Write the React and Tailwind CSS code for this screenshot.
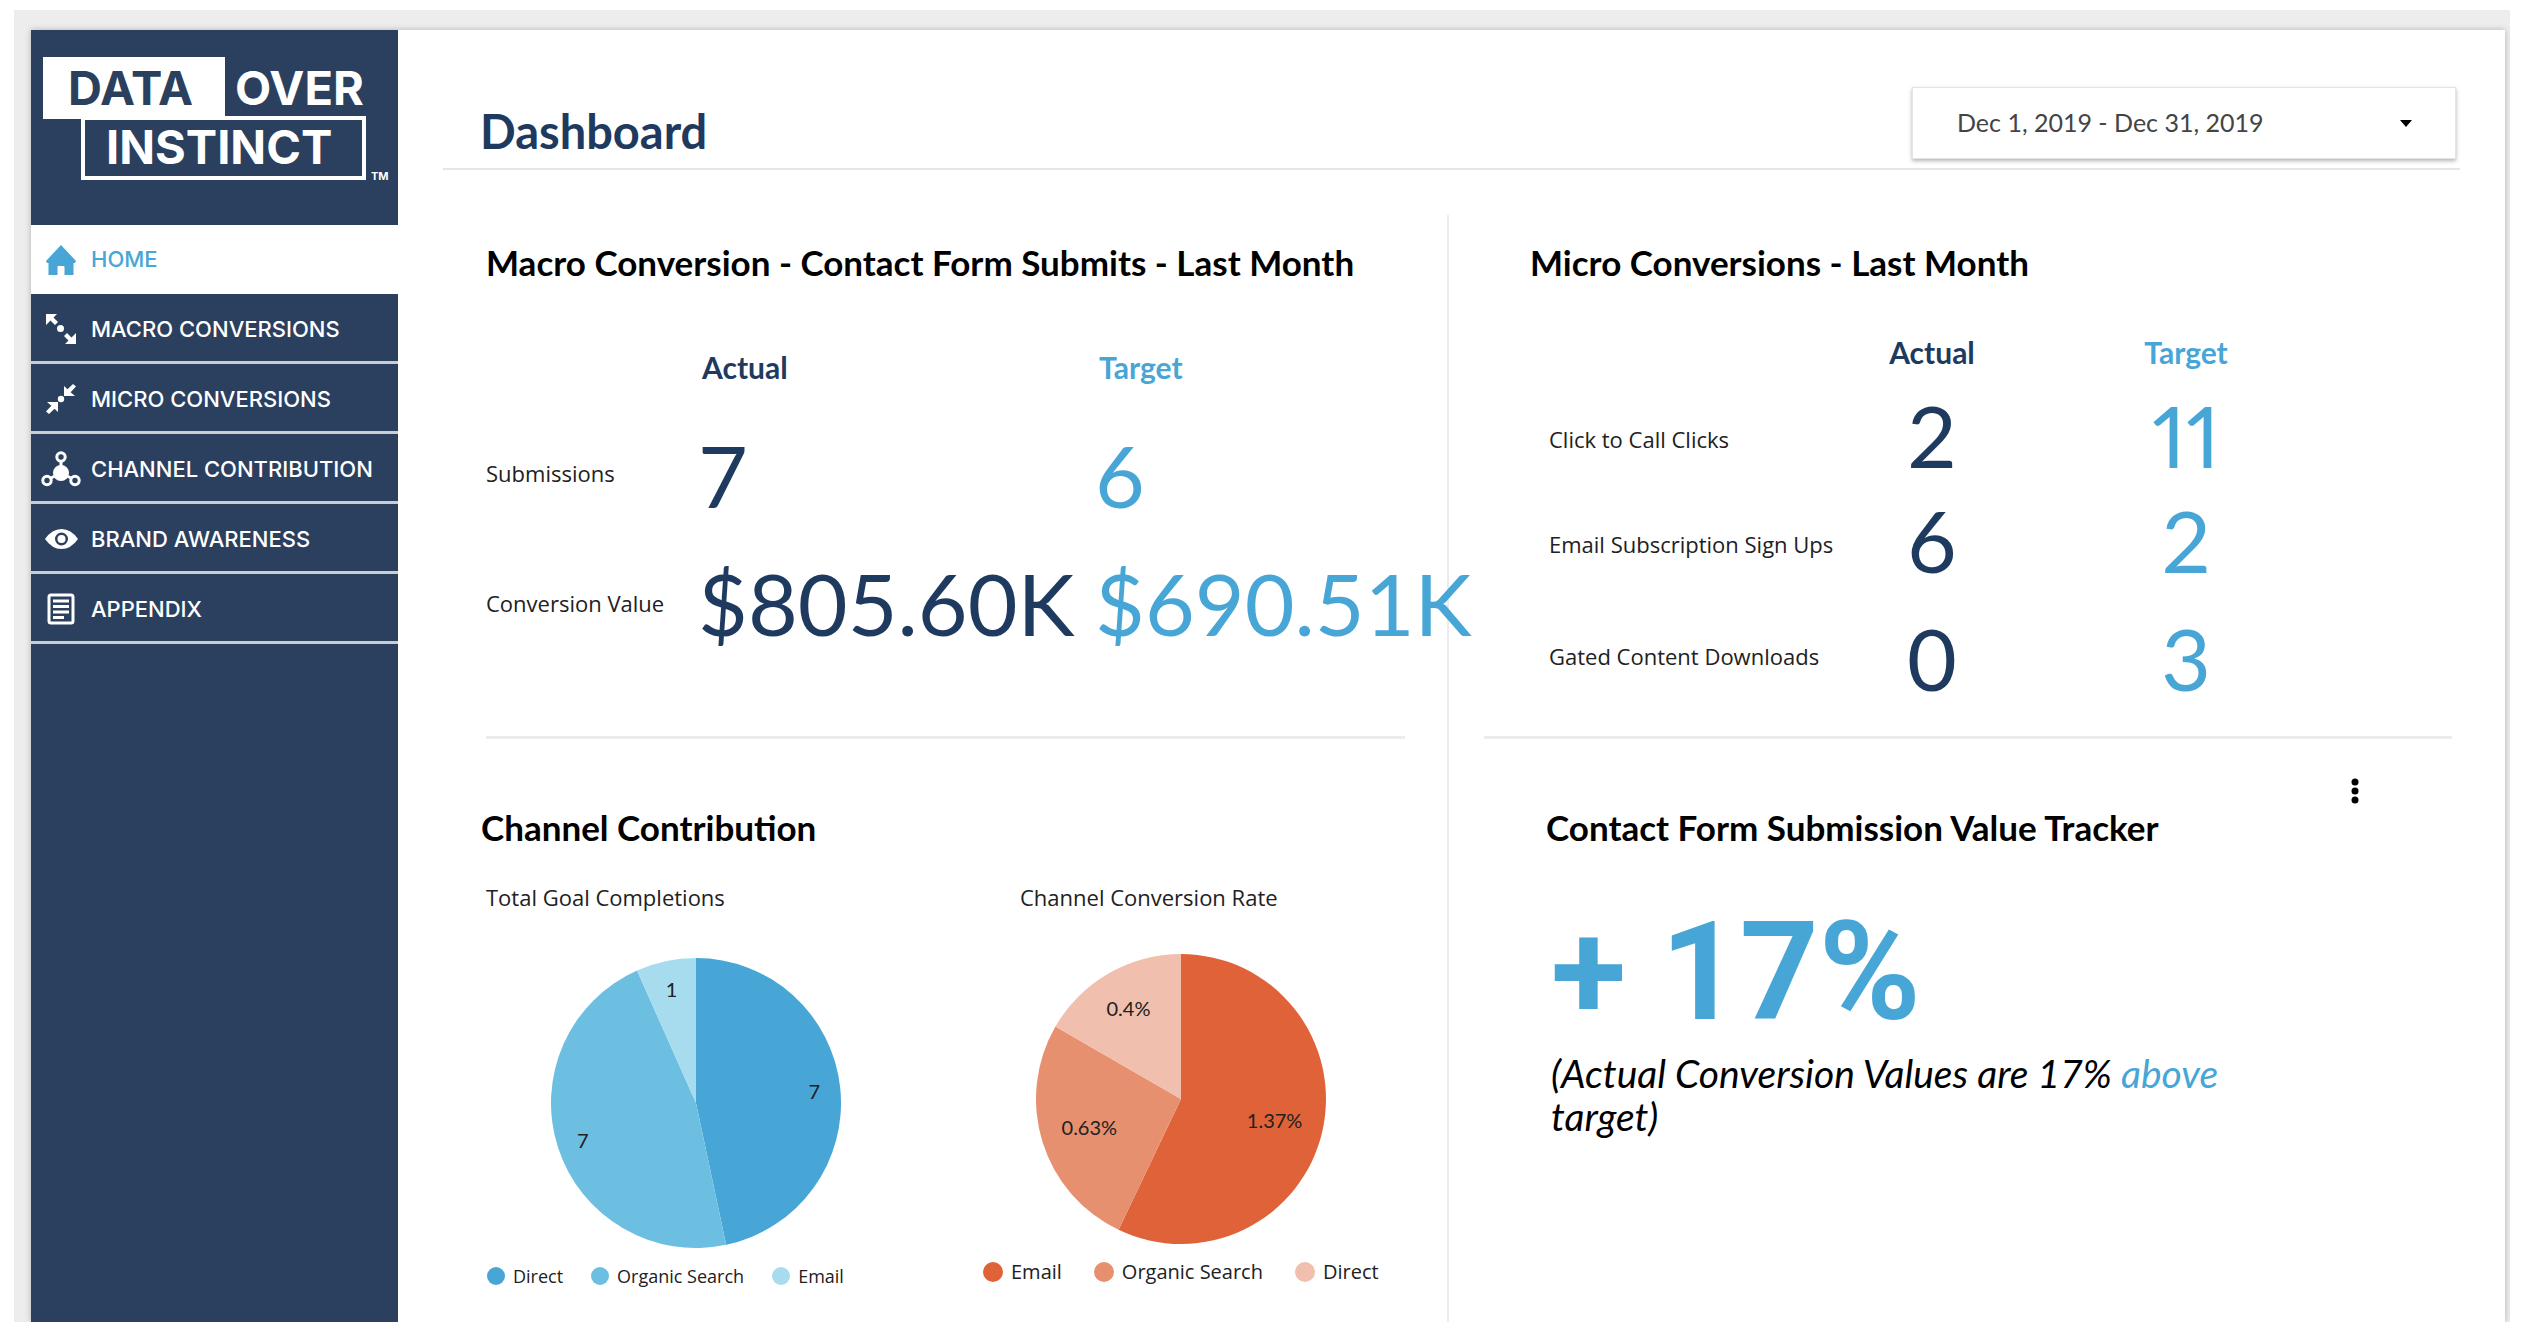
import React from 'react';

const MacroIcon = () => (
    <svg width="30" height="30" viewBox="0 0 30 30" fill="currentColor">
        <path d="M0 0h11l-3.500 3.500 4.500 4.500-3 3-4.500-4.500L0 11z" />
        <path d="M30 30H19l3.500-3.500-4.500-4.500 3-3 4.500 4.500L30 19z" />
        <circle cx="14.500" cy="14.500" r="3.500" />
    </svg>
);

const MicroIcon = () => (
    <svg width="30" height="30" viewBox="0 0 30 30" fill="currentColor">
        <path d="M18 12V2l3.500 3.200L27 0l3 2.500-5.400 5.700L29 12z" />
        <path d="M12 18v10l-3.500-3.200L3 30l-3-2.500 5.400-5.700L1 18z" />
        <circle cx="15" cy="15" r="3.200" />
    </svg>
);

const ChannelIcon = () => (
    <svg width="40" height="36" viewBox="0 0 40 36" fill="none" stroke="currentColor" strokeWidth="3">
        <path d="M20 10v12M20 22l-10 5M20 22l10 5" />
        <circle cx="20" cy="22" r="7" fill="currentColor" strokeWidth="2" />
        <circle cx="20" cy="6" r="4.200" />
        <circle cx="6" cy="29.500" r="4.200" />
        <circle cx="34" cy="29.500" r="4.200" />
    </svg>
);

const HomeIcon = () => (
    <svg width="30" height="30" viewBox="0 0 30 30" fill="currentColor">
        <path d="M15 0l15 16-1 2h-1.500v12h-9v-8q0-1-1-1h-5q-1 0-1 1v8h-9V18H1l-1-2z" />
    </svg>
);

const EyeIcon = () => (
    <svg width="33" height="20" viewBox="0 0 33 20" fill="currentColor" fillRule="evenodd">
        <path d="M0 10Q7 0 16.500 0T33 10Q26 20 16.500 20T0 10zM16.500 3.500a6.500 6.500 0 100 13 6.500 6.500 0 000-13z" />
        <circle cx="16.500" cy="10" r="4" />
    </svg>
);

const AppendixIcon = () => (
    <svg width="28" height="32" viewBox="0 0 28 32" fill="none" stroke="currentColor" strokeWidth="3">
        <rect x="2" y="2" width="24" height="28" rx="2" />
        <path d="M6 8h16M6 13.500h16M6 19h16M6 24.500h11" />
    </svg>
);

const NAV_ITEMS = [
    { label: 'MACRO CONVERSIONS', icon: MacroIcon },
    { label: 'MICRO CONVERSIONS', icon: MicroIcon },
    { label: 'CHANNEL CONTRIBUTION', icon: ChannelIcon },
    { label: 'BRAND AWARENESS', icon: EyeIcon },
    { label: 'APPENDIX', icon: AppendixIcon }
];

const MICRO_ROWS = [
    { label: 'Click to Call Clicks', actual: '2', target: '11', height: 'h-[104px]', pad: 'pt-2' },
    { label: 'Email Subscription Sign Ups', actual: '6', target: '2', height: 'h-[106px]', pad: 'pt-2' },
    { label: 'Gated Content Downloads', actual: '0', target: '3', height: 'h-[130px]', pad: 'pb-1' }
];

const COMPLETIONS = [
    { name: 'Direct', value: 7, label: '7', color: '#47a6d6', labelRadius: 119 },
    { name: 'Organic Search', value: 7, label: '7', color: '#6cbfe0', labelRadius: 119 },
    { name: 'Email', value: 1, label: '1', color: '#a6dcee', labelRadius: 117 }
];

const RATES = [
    { name: 'Email', value: 1.37, label: '1.37%', color: '#e06238', labelRadius: 96 },
    { name: 'Organic Search', value: 0.63, label: '0.63%', color: '#e79070', labelRadius: 96 },
    { name: 'Direct', value: 0.4, label: '0.4%', color: '#f0bfad', labelRadius: 105 }
];

const Logo = () => (
    <svg width="367" height="195" viewBox="0 0 367 195" className="block" role="img" aria-label="Data Over Instinct">
        <rect x="52" y="88" width="281" height="60" fill="none" stroke="#fff" strokeWidth="4" />
        <rect x="12" y="27" width="182" height="62" fill="#fff" />
        <g fontFamily="Inter, sans-serif" fontWeight="700" fontSize="47">
            <text x="37" y="75" fill="#2b405f">DATA</text>
            <text x="204" y="75" fill="#fff">OVER</text>
            <text x="75" y="134" fill="#fff">INSTINCT</text>
            <text x="340" y="150" fill="#fff" fontSize="11">TM</text>
        </g>
    </svg>
);

/**
 * Left navigation with logo
 */
const Sidebar = () => (
    <aside className="w-[367px] shrink-0 bg-[#2b405f] text-white font-['Inter',sans-serif] text-[22px] font-medium">
        <Logo />
        <nav>
            <a href="#home" className="flex h-[69px] items-center bg-white text-[#47a6d6]">
                <span className="flex w-[60px] justify-center"><HomeIcon /></span>
                HOME
            </a>
            {NAV_ITEMS.map(({ label, icon: Icon }) => (
                <a key={label} href="#" className="flex h-[70px] items-center border-b-3 border-[#c8cdd6] pt-[3px] whitespace-nowrap">
                    <span className="flex w-[60px] justify-center"><Icon /></span>
                    {label}
                </a>
            ))}
        </nav>
    </aside>
);

const SectionTitle = ({ children }) => (
    <h2 className="font-['Lato',sans-serif] text-[35px] leading-[38px] font-bold whitespace-nowrap text-black">{children}</h2>
);

const PieChart = ({ title, data, titleClass, pieClass, legendClass, dotClass }) => {
    const total = data.reduce((sum, d) => sum + d.value, 0);
    const point = (share, r) => {
        const a = share * 2 * Math.PI;
        return [145 + r * Math.sin(a), 145 - r * Math.cos(a)];
    };
    let start = 0;
    const slices = data.map((d) => {
        const from = start;
        const to = start + d.value / total;
        start = to;
        const [x1, y1] = point(from, 145);
        const [x2, y2] = point(to, 145);
        const [lx, ly] = point((from + to) / 2, d.labelRadius);
        const large = to - from > 0.5 ? 1 : 0;
        return { ...d, lx, ly, path: `M145 145L${x1} ${y1}A145 145 0 ${large} 1 ${x2} ${y2}Z` };
    });

    return (
        <figure className="text-[#212121]">
            <figcaption className={`font-['Open_Sans',sans-serif] text-[22px] leading-[30px] ${titleClass}`}>{title}</figcaption>
            <svg width="290" height="290" viewBox="0 0 290 290" className={pieClass}>
                {slices.map((s) => <path key={s.name} d={s.path} fill={s.color} />)}
                {slices.map((s) => (
                    <text key={s.name} x={s.lx} y={s.ly + 8} textAnchor="middle" fontSize="20" fontFamily="Lato, sans-serif" fill="#212121">
                        {s.label}
                    </text>
                ))}
            </svg>
            <ul className={`mt-[13px] flex font-['Open_Sans',sans-serif] leading-[30px] ${legendClass}`}>
                {data.map((d) => (
                    <li key={d.name} className="flex items-center gap-2 whitespace-nowrap">
                        <span className={`rounded-full ${dotClass}`} style={{ backgroundColor: d.color }} />
                        {d.name}
                    </li>
                ))}
            </ul>
        </figure>
    );
};

const MacroTable = () => (
    <table className="mt-[61px] table-fixed w-full text-left">
        <thead>
            <tr className="h-[50px] font-['Lato',sans-serif] text-[30px] leading-[36px]">
                <td className="w-[212px]" />
                <th className="w-[397px] pl-1 font-bold text-[#1f3a5f]">Actual</th>
                <th className="pl-1 font-bold text-[#47a6d6]">Target</th>
            </tr>
        </thead>
        <tbody className="font-['Lato',sans-serif] text-[86px] leading-[90px] whitespace-nowrap">
            <tr className="h-[166px]">
                <th className="pb-1 font-['Open_Sans',sans-serif] text-[22px] leading-[30px] font-normal text-[#212121]">Submissions</th>
                <td className="text-[#1f3a5f]">7</td>
                <td className="text-[#47a6d6]">6</td>
            </tr>
            <tr className="h-[90px]">
                <th className="font-['Open_Sans',sans-serif] text-[22px] leading-[30px] font-normal text-[#212121]">Conversion Value</th>
                <td className="text-[#1f3a5f]">$805.60K</td>
                <td className="text-[#47a6d6]">$690.51K</td>
            </tr>
        </tbody>
    </table>
);

const MicroTable = () => (
    <table className="mt-[40px] ml-[65px] text-center">
        <thead>
            <tr className="h-[62px] font-['Lato',sans-serif] text-[30px] leading-[36px]">
                <td className="w-[300px]" />
                <th className="w-[166px] font-bold text-[#1f3a5f]">Actual</th>
                <th className="w-[342px] font-bold text-[#47a6d6]">Target</th>
            </tr>
        </thead>
        <tbody className="font-['Lato',sans-serif] text-[86px] leading-[90px]">
            {MICRO_ROWS.map((row) => (
                <tr key={row.label} className={row.height}>
                    <th className={`text-left font-['Open_Sans',sans-serif] text-[22px] leading-[30px] font-normal whitespace-nowrap text-[#212121] ${row.pad}`}>{row.label}</th>
                    <td className="text-[#1f3a5f]">{row.actual}</td>
                    <td className="text-[#47a6d6] proportional-nums">{row.target}</td>
                </tr>
            ))}
        </tbody>
    </table>
);

const Header = () => (
    <header className="flex h-[140px] items-end justify-between border-b-2 border-[#e6e6e6] pl-[37px]">
        <h1 className="pb-[9px] font-['Lato',sans-serif] text-[47px] leading-[56px] font-bold text-[#1f3a5f]">Dashboard</h1>
        <button className="mr-1 mb-[9px] flex h-[72px] w-[544px] items-center justify-between border border-[#e4e4e4] bg-white pr-[43px] pl-[44px] font-['Lato',sans-serif] text-[25px] text-[#444] shadow-[0_2px_4px_rgba(0,0,0,0.3)]">
            Dec 1, 2019 - Dec 31, 2019
            <svg width="12" height="7" viewBox="0 0 12 7"><path d="M0 0h12L6 7z" fill="#000" /></svg>
        </button>
    </header>
);

const App = () => (
    <div className="bg-white pt-[10px] pr-[16px] pb-[20px] pl-[14px]">
        <div className="overflow-hidden bg-[#ededed] pt-5 pr-[5px] pl-[17px]">
            <div className="flex min-h-[1292px] bg-white shadow-[0_0_6px_rgba(0,0,0,0.25)]">
                <Sidebar />
                <main className="flex flex-1 flex-col pr-[45px] pl-[45px]">
                    <Header />
                    <div className="mt-[45px] grid flex-1 grid-cols-[1006fr_1011fr]">
                        <div className="flex flex-col border-r-2 border-[#ececec] pr-[42px] pl-[38px]">
                            <section className="ml-[5px] h-[524px] border-b-3 border-[#ececec] pt-7">
                                <SectionTitle>Macro Conversion - Contact Form Submits - Last Month</SectionTitle>
                                <MacroTable />
                            </section>
                            <section className="pt-[69px]">
                                <SectionTitle>Channel Contribution</SectionTitle>
                                <div className="mt-9 flex pl-[5px]">
                                    <div className="w-[497px] shrink-0">
                                        <PieChart
                                            title="Total Goal Completions"
                                            data={COMPLETIONS}
                                            titleClass=""
                                            pieClass="mt-[46px] ml-[65px]"
                                            legendClass="text-[18px] gap-7 pl-px"
                                            dotClass="size-[18px]"
                                        />
                                    </div>
                                    <PieChart
                                        title="Channel Conversion Rate"
                                        data={RATES}
                                        titleClass="pl-[37px]"
                                        pieClass="mt-[42px] ml-[53px]"
                                        legendClass="text-[20px] gap-8"
                                        dotClass="size-5"
                                    />
                                </div>
                            </section>
                        </div>
                        <div className="flex flex-col pr-2 pl-[35px]">
                            <section className="h-[524px] border-b-3 border-[#ececec] pt-7">
                                <div className="pl-[46px]">
                                    <SectionTitle>Micro Conversions - Last Month</SectionTitle>
                                </div>
                                <MicroTable />
                            </section>
                            <section className="pt-[35px] pl-[62px]">
                                <div className="flex h-[34px] justify-end pr-[93px]">
                                    <button aria-label="More options">
                                        <svg width="8" height="26" viewBox="0 0 8 26"><circle cx="4" cy="4" r="3.500" /><circle cx="4" cy="13" r="3.500" /><circle cx="4" cy="22" r="3.500" /></svg>
                                    </button>
                                </div>
                                <SectionTitle>Contact Form Submission Value Tracker</SectionTitle>
                                <div className="max-w-[740px] pt-[46px] pl-[5px]">
                                    <p className="font-['Roboto',sans-serif] text-[138px] leading-[160px] font-bold text-[#47a6d6]">+ 17%</p>
                                    <p className="font-['Lato',sans-serif] text-[39px] leading-[43px] text-black italic">
                                        (Actual Conversion Values are 17% <span className="text-[#47a6d6]">above</span> target)
                                    </p>
                                </div>
                            </section>
                        </div>
                    </div>
                </main>
            </div>
        </div>
    </div>
);

export default App;
